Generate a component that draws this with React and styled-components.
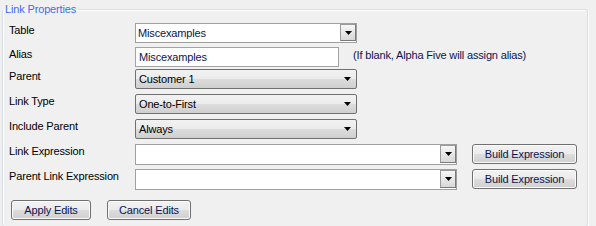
import React from "react";
import styled, { createGlobalStyle } from "styled-components";

const GlobalStyle = createGlobalStyle`
  html, body {
    margin: 0;
    background: #f0f0f0;
  }
  body {
    font-family: "Liberation Sans", Arial, sans-serif;
    font-size: 11px;
    letter-spacing: -0.15px;
    color: #000;
    overflow: hidden;
  }
`;

const Panel = styled.fieldset`
  margin: 3px 0 0 2px;
  width: 586px;
  min-height: 224px;
  padding: 0;
  border: 1px solid #d5dfe5;
  border-radius: 3px;
  box-shadow: inset 1px 1px 0 #fff, 1px 1px 0 #fff;
  box-sizing: border-box;
`;

const Legend = styled.legend`
  padding: 0 2px;
  margin-left: 0;
  line-height: 13px;
  color: #3d6cf2;
`;

const Form = styled.div`
  display: flex;
  flex-direction: column;
  padding: 7px 0 0 6px;
`;

const Row = styled.div`
  display: flex;
  align-items: flex-start;
  height: ${(p) => p.$h}px;
`;

const Label = styled.div`
  width: 126px;
  flex: none;
  padding-top: 1px;
  line-height: 13px;
  white-space: nowrap;
`;

const Hint = styled.div`
  margin-left: 14px;
  padding-top: 2px;
  line-height: 13px;
  color: #0a1450;
  white-space: nowrap;
`;

const TextBox = styled.div`
  width: ${(p) => p.$w}px;
  height: 20px;
  box-sizing: border-box;
  background: #fff;
  border: 1px solid #a3a3a3;
  padding: 0 3px;
  display: flex;
  align-items: center;
  color: #0a1450;
`;

const Combo = styled.div`
  width: ${(p) => p.$w}px;
  height: ${(p) => p.$h}px;
  box-sizing: border-box;
  background: #fff;
  border: 1px solid #a0a0a0;
  display: flex;
  align-items: stretch;
  color: #0a1450;
`;

const ComboText = styled.div`
  flex: 1;
  padding: 0 2px;
  display: flex;
  align-items: center;
`;

const DropButton = styled.div`
  width: 16px;
  box-sizing: border-box;
  margin: 0 0 1px 0;
  border: 1px solid #7a7a7a;
  border-top-color: #9a9a9a;
  border-left-color: #9a9a9a;
  background: linear-gradient(#f6f6f6, #d8d8d8);
  display: flex;
  align-items: center;
  justify-content: center;
`;

const Select = styled.div`
  width: 222px;
  height: 20px;
  box-sizing: border-box;
  border: 1px solid #707070;
  border-radius: 2px;
  background: linear-gradient(#f2f2f2 0%, #ebebeb 50%, #dddddd 51%, #cfcfcf 100%);
  display: flex;
  align-items: center;
  justify-content: space-between;
  padding: 0 5px 0 3px;
`;

const Button = styled.button`
  width: ${(p) => p.$w}px;
  height: 20px;
  padding: 0;
  font: inherit;
  letter-spacing: inherit;
  color: #0a1450;
  border: 1px solid #707070;
  border-radius: 3px;
  background: linear-gradient(#f2f2f2 0%, #ebebeb 50%, #dddddd 51%, #cfcfcf 100%);
  box-shadow: inset 0 0 0 1px #fcfcfc;
  flex: none;
`;

const ExprButton = styled(Button)`
  margin-left: 15px;
`;

const ButtonBar = styled.div`
  display: flex;
  gap: 16px;
  padding-left: 2px;
`;

const Arrow = () => (
  <svg width="7" height="4" viewBox="0 0 7 4">
    <polygon points="0,0 7,0 3.5,4" fill="#000" />
  </svg>
);

const DropSelect = ({ value }) => (
  <Select>
    <span>{value}</span>
    <Arrow />
  </Select>
);

const ComboBox = ({ w, h, value }) => (
  <Combo $w={w} $h={h}>
    <ComboText>{value}</ComboText>
    <DropButton>
      <Arrow />
    </DropButton>
  </Combo>
);

export default function App() {
  return (
    <>
      <GlobalStyle />
      <Panel>
        <Legend>Link Properties</Legend>
        <Form>
          <Row $h={24}>
            <Label>Table</Label>
            <ComboBox w={222} h={20} value="Miscexamples" />
          </Row>
          <Row $h={22}>
            <Label>Alias</Label>
            <TextBox $w={204}>Miscexamples</TextBox>
            <Hint>(If blank, Alpha Five will assign alias)</Hint>
          </Row>
          <Row $h={25}>
            <Label>Parent</Label>
            <DropSelect value="Customer 1" />
          </Row>
          <Row $h={25}>
            <Label>Link Type</Label>
            <DropSelect value="One-to-First" />
          </Row>
          <Row $h={25}>
            <Label>Include Parent</Label>
            <DropSelect value="Always" />
          </Row>
          <Row $h={25}>
            <Label>Link Expression</Label>
            <ComboBox w={322} h={21} value="" />
            <ExprButton $w={105}>Build Expression</ExprButton>
          </Row>
          <Row $h={31}>
            <Label>Parent Link Expression</Label>
            <ComboBox w={322} h={21} value="" />
            <ExprButton $w={105}>Build Expression</ExprButton>
          </Row>
          <ButtonBar>
            <Button $w={80}>Apply Edits</Button>
            <Button $w={84}>Cancel Edits</Button>
          </ButtonBar>
        </Form>
      </Panel>
    </>
  );
}
